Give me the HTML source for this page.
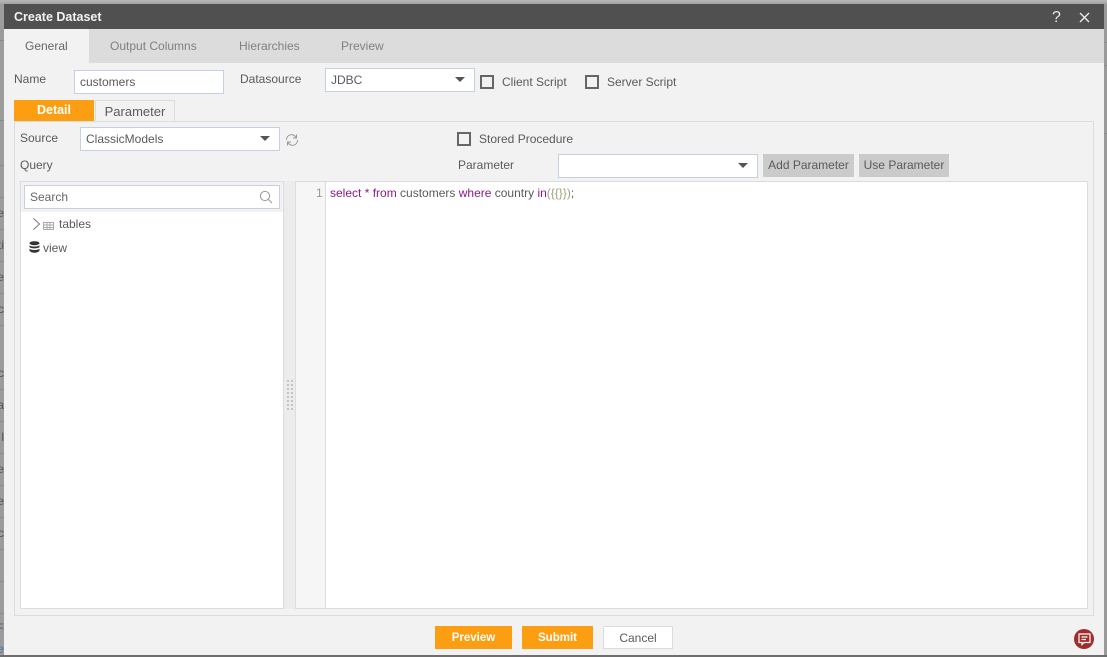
<!DOCTYPE html>
<html><head><meta charset="utf-8"><style>
html,body{margin:0;padding:0}
body{width:1107px;height:657px;position:relative;overflow:hidden;background:#9c9c9c;font-family:"Liberation Sans",sans-serif;font-size:12px;color:#5a5a5a}
div,span.a{position:absolute;box-sizing:border-box;white-space:nowrap}
.t{line-height:16px;height:16px}
.inp{background:#fff;border:1px solid #c5d0e0;padding-left:5px;color:#5a5a5a}
.cb{width:14px;height:14px;border:2px solid #666;background:#f2f2f2}
.car{width:0;height:0;border-left:5px solid transparent;border-right:5px solid transparent;border-top:5px solid #555}
.btn{background:#cbcbcb;color:#5a5a5a;text-align:center;line-height:22px;height:23px;top:154px}
.ob{background:#fb9e12;color:#fff;font-weight:bold;font-size:11.5px;text-align:center;height:23px;line-height:24px;top:626px}
.bg{left:0;width:4px;color:#555;overflow:hidden;line-height:16px;height:16px;direction:rtl}
.ln{left:0;width:4px;height:1px;background:#8c8c8c}
.rl{left:1104px;width:3px;height:1px;background:#8c8c8c}
</style></head><body>
<div style="left:0;top:0;width:1107px;height:2px;background:#b4b4b4"></div>
<div style="left:0;top:2px;width:1107px;height:2px;background:#a8a8a8"></div>
<div style="left:1104px;top:4px;width:3px;height:653px;background:#9a9a9a"></div>
<div class="rl" style="top:42px"></div><div class="rl" style="top:65px"></div><div class="rl" style="top:133px"></div>
<div style="left:0;top:655px;width:1107px;height:2px;background:#6e6e6e"></div>
<div class="ln" style="top:40px"></div><div class="ln" style="top:120px"></div><div class="ln" style="top:165px"></div><div class="ln" style="top:197px"></div><div class="ln" style="top:229px"></div><div class="ln" style="top:261px"></div><div class="ln" style="top:293px"></div><div class="ln" style="top:325px"></div><div class="ln" style="top:389px"></div><div class="ln" style="top:421px"></div><div class="ln" style="top:453px"></div><div class="ln" style="top:485px"></div><div class="ln" style="top:517px"></div><div class="ln" style="top:549px"></div><div class="ln" style="top:581px"></div><div class="ln" style="top:613px"></div>
<div class="bg" style="top:365px">c</div><div class="bg" style="top:397px">a</div><div class="bg" style="top:429px">l</div><div class="bg" style="top:461px">e</div><div class="bg" style="top:493px">e</div><div class="bg" style="top:525px">c</div><div class="bg" style="top:620px;color:#558">F</div><div class="bg" style="top:641px;color:#47a">e</div><div class="bg" style="top:205px">e</div><div class="bg" style="top:237px">ti</div><div class="bg" style="top:269px">e</div><div class="bg" style="top:301px">c</div>

<div style="left:4px;top:4px;width:1100px;height:651px;background:#f2f2f2"></div>
<div style="left:4px;top:4px;width:1100px;height:25px;background:#505050"></div>
<div class="t" style="left:14px;top:9px;color:#f2f2f2;font-weight:bold;font-size:12.5px">Create Dataset</div>
<div class="t" style="left:1052px;top:10px;color:#e8e8e8;font-size:16px">?</div>
<svg style="position:absolute;left:1079px;top:12px" width="11" height="11" viewBox="0 0 11 11"><path d="M1 1L10 10M10 1L1 10" stroke="#eee" stroke-width="1.3" fill="none"/></svg>

<div style="left:4px;top:29px;width:1100px;height:34px;background:#dcdcdc"></div>
<div style="left:4px;top:29px;width:85px;height:34px;background:#f2f2f2"></div>
<div class="t" style="left:25px;top:38px;color:#666">General</div>
<div class="t" style="left:110px;top:38px;color:#808080">Output Columns</div>
<div class="t" style="left:239px;top:38px;color:#808080">Hierarchies</div>
<div class="t" style="left:341px;top:38px;color:#808080">Preview</div>

<div class="t" style="left:14px;top:71px">Name</div>
<div class="inp t" style="left:74px;top:70px;width:150px;height:24px;line-height:22px">customers</div>
<div class="t" style="left:240px;top:71px">Datasource</div>
<div class="inp t" style="left:325px;top:68px;width:150px;height:24px;line-height:22px">JDBC</div>
<div class="car" style="left:455px;top:77px"></div>
<div class="cb" style="left:480px;top:75px"></div>
<div class="t" style="left:502px;top:74px">Client Script</div>
<div class="cb" style="left:585px;top:75px"></div>
<div class="t" style="left:607px;top:74px">Server Script</div>

<div style="left:14px;top:100px;width:80px;height:21px;background:#fb9e12;color:#fff;font-weight:bold;font-size:12.5px;text-align:center;line-height:21px">Detail</div>
<div style="left:95px;top:100px;width:80px;height:21px;border:1px solid #dcdcdc;border-bottom:0;text-align:center;line-height:21px;font-size:13px">Parameter</div>
<div style="left:14px;top:121px;width:1080px;height:495px;border:1px solid #dcdcdc"></div>

<div class="t" style="left:20px;top:130px">Source</div>
<div class="inp t" style="left:80px;top:127px;width:200px;height:24px;line-height:22px">ClassicModels</div>
<div class="car" style="left:260px;top:136px"></div>
<svg style="position:absolute;left:285px;top:133px" width="14" height="14" viewBox="0 0 14 14" fill="none" stroke="#999" stroke-width="1"><path d="M1.5 7A5 5 0 0 1 11 4.5M12.5 7A5 5 0 0 1 3 9.5"/><path d="M11.5 1.5V5H8M2.5 12.5V9H6"/></svg>
<div class="t" style="left:20px;top:157px">Query</div>
<div class="cb" style="left:457px;top:132px"></div>
<div class="t" style="left:479px;top:131px">Stored Procedure</div>
<div class="t" style="left:458px;top:157px">Parameter</div>
<div class="inp" style="left:558px;top:154px;width:200px;height:24px"></div>
<div class="car" style="left:738px;top:163px"></div>
<div class="btn" style="left:763px;width:91px">Add Parameter</div>
<div class="btn" style="left:859px;width:90px">Use Parameter</div>

<div style="left:20px;top:181px;width:264px;height:428px;background:#fff;border:1px solid #dcdcdc"></div>
<div style="left:21px;top:182px;width:262px;height:30px;background:#f2f2f2"></div>
<div class="inp t" style="left:24px;top:185px;width:256px;height:24px;line-height:22px;color:#666">Search</div>
<svg style="position:absolute;left:259px;top:190px" width="14" height="14" viewBox="0 0 14 14" fill="none" stroke="#999" stroke-width="1"><circle cx="6" cy="6" r="4.6"/><path d="M9.5 9.5L13 13"/></svg>
<svg style="position:absolute;left:32px;top:217px" width="9" height="14" viewBox="0 0 9 14" fill="none" stroke="#777" stroke-width="1"><path d="M1.5 1.5L7.5 7L1.5 12.5"/></svg>
<svg style="position:absolute;left:43px;top:221px" width="11" height="9" viewBox="0 0 11 9" fill="none" stroke="#aaa" stroke-width="1"><path d="M0 1.5H11M0 4H11M0 6.5H11M.5 1V8.5H10.5V1M4 2V8M7 2V8"/></svg>
<div class="t" style="left:59px;top:216px">tables</div>
<svg style="position:absolute;left:29px;top:241px" width="11" height="13" viewBox="0 0 11 13" fill="#333"><ellipse cx="5.5" cy="2.2" rx="5" ry="2"/><path d="M.5 4.2C2 6 9 6 10.5 4.2V6C9 7.8 2 7.8.5 6ZM.5 7.6C2 9.4 9 9.4 10.5 7.6V9.6C9 12.4 2 12.4.5 9.6Z"/></svg>
<div class="t" style="left:43px;top:240px">view</div>

<div style="left:284px;top:181px;width:11px;height:428px;background:#ececec"></div>
<svg style="position:absolute;left:287px;top:380px" width="6" height="31" fill="#c4c4c4"><path d="M0 0h2v2H0zM4 0h2v2H4zM0 4h2v2H0zM4 4h2v2H4zM0 8h2v2H0zM4 8h2v2H4zM0 12h2v2H0zM4 12h2v2H4zM0 16h2v2H0zM4 16h2v2H4zM0 20h2v2H0zM4 20h2v2H4zM0 24h2v2H0zM4 24h2v2H4zM0 28h2v2H0zM4 28h2v2H4z"/></svg>
<div style="left:295px;top:181px;width:793px;height:428px;background:#fff;border:1px solid #dcdcdc"></div>
<div style="left:296px;top:182px;width:30px;height:426px;background:#f6f6f6;border-right:1px solid #dcdcdc"></div>
<div class="t" style="left:316px;top:185px;color:#999">1</div>
<div class="t" style="left:330px;top:185px;color:#5a5a5a"><span style="color:#8a1a8a">select</span> <span style="color:#8a1a8a">*</span> <span style="color:#8a1a8a">from</span> customers <span style="color:#8a1a8a">where</span> country <span style="color:#8a1a8a">in</span><span style="color:#a0a080">({{}})</span>;</div>

<div class="ob" style="left:435px;width:77px">Preview</div>
<div class="ob" style="left:522px;width:71px">Submit</div>
<div style="left:603px;top:626px;width:70px;height:23px;background:#fff;border:1px solid #dcdcdc;text-align:center;line-height:22px;color:#5a5a5a">Cancel</div>

<div style="left:1074px;top:629px;width:20px;height:20px;border-radius:50%;background:#a02c2c"></div>
<svg style="position:absolute;left:1078px;top:633px" width="13" height="13" viewBox="0 0 13 13" fill="none" stroke="#fff" stroke-width="1.2"><path d="M1 1H12V9.5H6L4 11.5V9.5H1Z"/><path d="M3.5 4H9.5M3.5 6.5H8"/></svg>
</body></html>
